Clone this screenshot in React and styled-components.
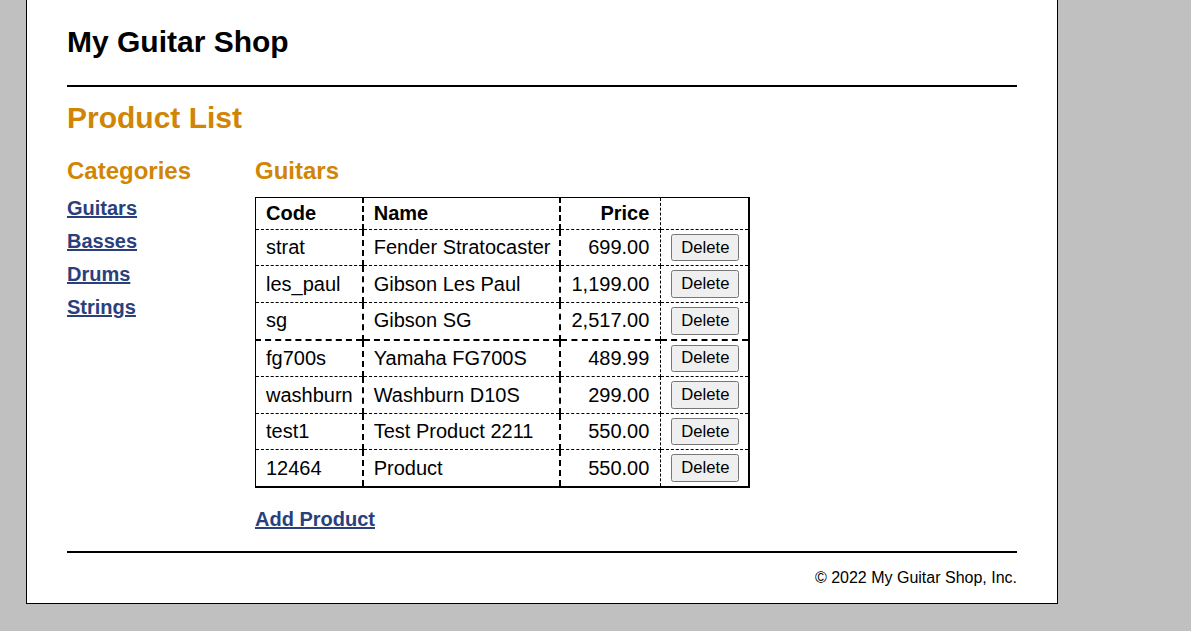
import React from "react";
import styled, { createGlobalStyle } from "styled-components";

const ORANGE = "rgb(208, 133, 4)";
const LINK = "rgb(41, 64, 124)";

const products = [
  { code: "strat", name: "Fender Stratocaster", price: "699.00" },
  { code: "les_paul", name: "Gibson Les Paul", price: "1,199.00" },
  { code: "sg", name: "Gibson SG", price: "2,517.00" },
  { code: "fg700s", name: "Yamaha FG700S", price: "489.99" },
  { code: "washburn", name: "Washburn D10S", price: "299.00" },
  { code: "test1", name: "Test Product 2211", price: "550.00" },
  { code: "12464", name: "Product", price: "550.00" },
];

const categories = ["Guitars", "Basses", "Drums", "Strings"];

const GlobalStyle = createGlobalStyle`
  html {
    background-color: rgb(192, 192, 192);
  }
  body {
    margin: 0;
    font-family: "Liberation Sans", Arial, Helvetica, sans-serif;
  }
`;

const App = () => {
  return (
    <>
      <GlobalStyle />
      <Page>
        <Header>
          <ShopTitle>My Guitar Shop</ShopTitle>
        </Header>
        <main>
          <PageTitle>Product List</PageTitle>
          <Columns>
            <Aside>
              <SectionTitle>Categories</SectionTitle>
              <nav>
                <CategoryList>
                  {categories.map((c) => (
                    <CategoryItem key={c}>
                      <NavLink href="#">{c}</NavLink>
                    </CategoryItem>
                  ))}
                </CategoryList>
              </nav>
            </Aside>
            <Section>
              <SectionTitle>Guitars</SectionTitle>
              <Table>
                <thead>
                  <tr>
                    <Th $wide>Code</Th>
                    <Th $wide>Name</Th>
                    <Th $price>Price</Th>
                    <Th $last>&nbsp;</Th>
                  </tr>
                </thead>
                <tbody>
                  {products.map((p, i) => (
                    <tr key={p.code}>
                      <Td $wide $thickTop={i === 3}>
                        {p.code}
                      </Td>
                      <Td $wide $thickTop={i === 3}>
                        {p.name}
                      </Td>
                      <Td $price $thickTop={i === 3}>
                        {p.price}
                      </Td>
                      <Td $last $thickTop={i === 3}>
                        <DeleteForm onSubmit={(e) => e.preventDefault()}>
                          <DeleteButton type="submit">Delete</DeleteButton>
                        </DeleteForm>
                      </Td>
                    </tr>
                  ))}
                </tbody>
              </Table>
              <AddLinkRow>
                <NavLink href="#">Add Product</NavLink>
              </AddLinkRow>
            </Section>
          </Columns>
        </main>
        <Footer>
          <Copyright>&copy; 2022 My Guitar Shop, Inc.</Copyright>
        </Footer>
      </Page>
    </>
  );
};

export default App;

const Page = styled.div`
  width: 950px;
  margin: 0 0 0 26px;
  padding: 25px 40px 0;
  background-color: white;
  border: 1px solid black;
  border-top: none;
  font-size: 20px;
  color: black;
`;

const Header = styled.header`
  padding-bottom: 25.5px;
  border-bottom: 2px solid black;
`;

const ShopTitle = styled.h1`
  margin: 0;
  font-size: 30px;
  line-height: normal;
  color: black;
`;

const PageTitle = styled.h1`
  margin: 0;
  padding: 14px 0 8.5px;
  font-size: 30px;
  line-height: normal;
  color: ${ORANGE};
`;

const Columns = styled.div`
  display: flex;
  align-items: flex-start;
`;

const Aside = styled.aside`
  width: 188px;
  flex-shrink: 0;
`;

const Section = styled.section`
  width: 625px;
`;

const SectionTitle = styled.h2`
  margin: 0;
  padding: 13.5px 0 12.4px;
  font-size: 24px;
  line-height: normal;
  color: ${ORANGE};
`;

const CategoryList = styled.ul`
  list-style-type: none;
  margin: 0;
  padding: 0;
`;

const CategoryItem = styled.li`
  padding-bottom: 10px;
  line-height: 23px;
`;

const NavLink = styled.a`
  color: ${LINK};
  font-weight: bold;
  text-decoration: underline;

  &:hover {
    color: ${ORANGE};
  }
`;

const Table = styled.table`
  border-collapse: collapse;
  border: 2px solid black;
  border-top: 1px solid black;
  border-left: 1px solid black;
`;

const cellBorders = ({ $wide, $thickTop }) => `
  border: 1px dashed black;
  ${$wide ? "border-right: 2px dashed black;" : ""}
  ${$thickTop ? "border-top: 2px dashed black;" : ""}
`;

const rightPad = ({ $wide, $price, $last }) =>
  $wide ? "9px" : $price ? "11px" : $last ? "9px" : "10px";

const Th = styled.th`
  ${cellBorders}
  padding: 4px ${rightPad} 4px 10px;
  line-height: 23px;
  font-weight: bold;
  text-align: ${({ $price }) => ($price ? "right" : "left")};
  vertical-align: middle;
`;

const Td = styled.td`
  ${cellBorders}
  padding: 4px ${rightPad} 4px 10px;
  line-height: 23px;
  text-align: ${({ $price }) => ($price ? "right" : "left")};
  vertical-align: middle;
  white-space: nowrap;
`;

const DeleteForm = styled.form`
  margin: 0;
`;

const DeleteButton = styled.button`
  display: block;
  box-sizing: border-box;
  height: 27.6px;
  padding: 0 9px;
  font-family: "Liberation Sans", Arial, sans-serif;
  font-size: 16.67px;
  color: black;
  background-color: #efefef;
  border: 1px solid #767676;
  border-radius: 2.5px;
`;

const AddLinkRow = styled.p`
  margin: 20px 0 20px;
  line-height: 23px;
`;

const Footer = styled.footer`
  border-top: 2px solid black;
`;

const Copyright = styled.p`
  margin: 16px 0;
  font-size: 16px;
  line-height: normal;
  text-align: right;
`;
